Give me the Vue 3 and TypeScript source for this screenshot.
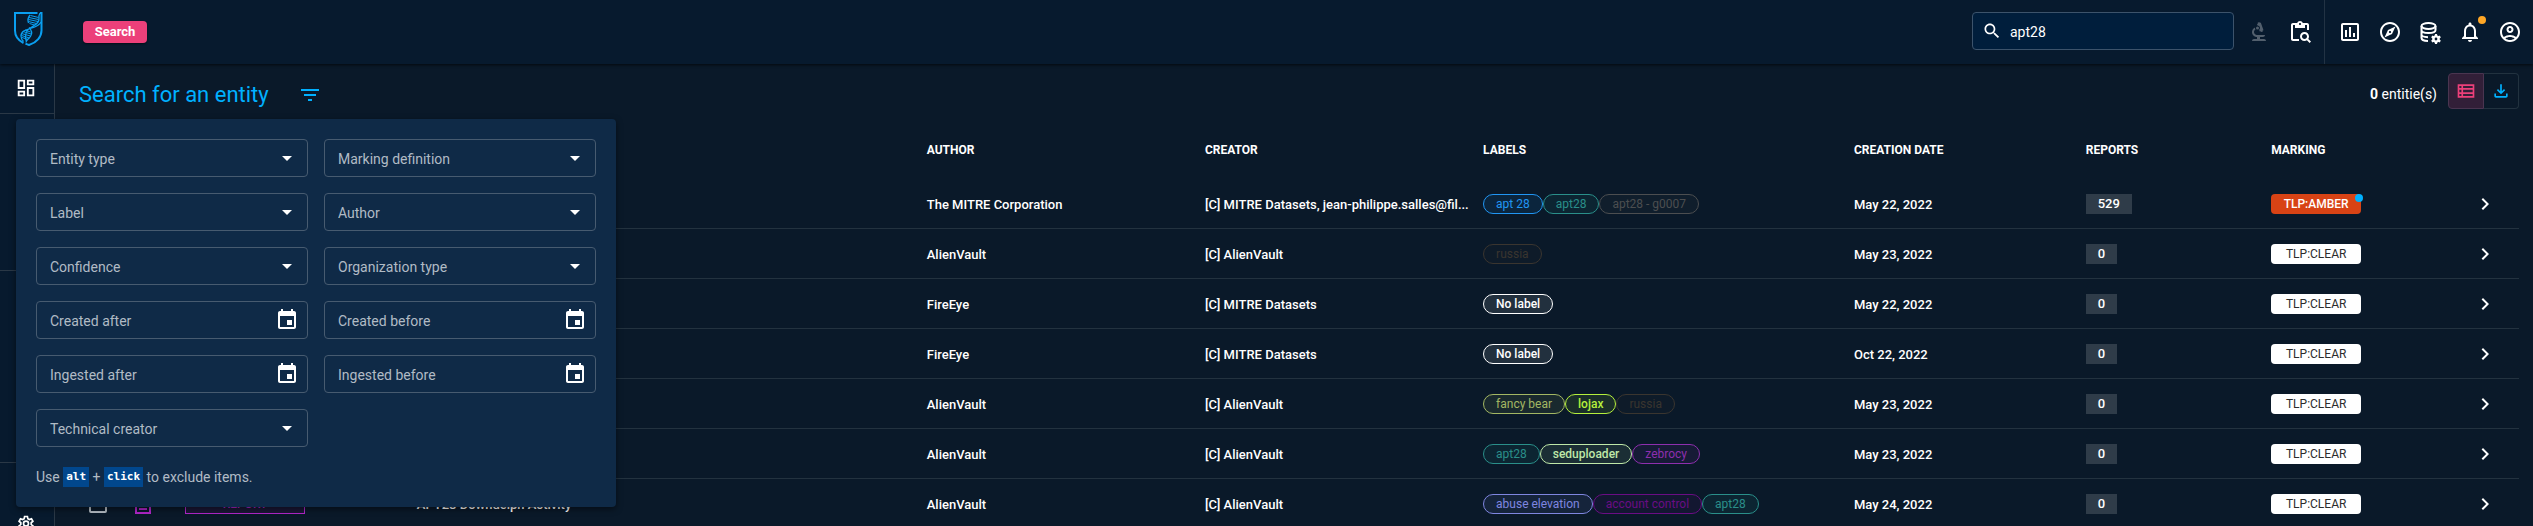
<script setup lang="ts">
import { ref } from 'vue'

interface Chip { text: string; color: string; strong?: boolean }
interface Row {
  name: string; author: string; creator: string; labels: Chip[]
  date: string; reports: number; amber?: boolean
}

const query = ref('apt28')

const teal: Chip = { text: 'apt28', color: '#2a8f8a' }
const russia: Chip = { text: 'russia', color: '#3a352f' }
const noLabel: Chip = { text: 'No label', color: '#ffffff', strong: true }

const rows: Row[] = [
  { name: 'APT28', author: 'The MITRE Corporation', creator: '[C] MITRE Datasets, jean-philippe.salles@fil...', labels: [{ text: 'apt 28', color: '#2196f3' }, teal, { text: 'apt28 - g0007', color: '#4c4e50' }], date: 'May 22, 2022', reports: 529, amber: true },
  { name: 'APT28', author: 'AlienVault', creator: '[C] AlienVault', labels: [russia], date: 'May 23, 2022', reports: 0 },
  { name: 'APT28', author: 'FireEye', creator: '[C] MITRE Datasets', labels: [noLabel], date: 'May 22, 2022', reports: 0 },
  { name: 'APT28', author: 'FireEye', creator: '[C] MITRE Datasets', labels: [noLabel], date: 'Oct 22, 2022', reports: 0 },
  { name: 'APT28', author: 'AlienVault', creator: '[C] AlienVault', labels: [{ text: 'fancy bear', color: '#a3b763' }, { text: 'lojax', color: '#b5f03c', strong: true }, russia], date: 'May 23, 2022', reports: 0 },
  { name: 'APT28', author: 'AlienVault', creator: '[C] AlienVault', labels: [teal, { text: 'seduploader', color: '#bfe8a8', strong: true }, { text: 'zebrocy', color: '#8e2fae' }], date: 'May 23, 2022', reports: 0 },
  { name: 'APT28 Downdelph Activity', author: 'AlienVault', creator: '[C] AlienVault', labels: [{ text: 'abuse elevation', color: '#7f86e0' }, { text: 'account control', color: '#6a0d84' }, teal], date: 'May 24, 2022', reports: 0 },
]

const filters: { label: string; date?: boolean }[] = [
  { label: 'Entity type' }, { label: 'Marking definition' },
  { label: 'Label' }, { label: 'Author' },
  { label: 'Confidence' }, { label: 'Organization type' },
  { label: 'Created after', date: true }, { label: 'Created before', date: true },
  { label: 'Ingested after', date: true }, { label: 'Ingested before', date: true },
  { label: 'Technical creator' },
]

const navIcons = [
  { name: 'Dashboards', path: 'M9 17H7v-7h2v7zm4 0h-2V7h2v10zm4 0h-2v-4h2v4zm2 2H5V5h14v14zm0-16H5c-1.100 0-2 .9-2 2v14c0 1.100.9 2 2 2h14c1.100 0 2-.9 2-2V5c0-1.100-.9-2-2-2z' },
  { name: 'Investigations', path: 'M12 2C6.480 2 2 6.480 2 12s4.480 10 10 10 10-4.480 10-10S17.520 2 12 2zm0 18c-4.410 0-8-3.590-8-8s3.590-8 8-8 8 3.590 8 8-3.590 8-8 8zm-5.500-2.500l7.510-3.490L17.500 6.500 9.990 9.990 6.500 17.500zm5.500-6.600c.61 0 1.100.49 1.100 1.100s-.49 1.100-1.100 1.100-1.100-.49-1.100-1.100.49-1.100 1.100-1.100z' },
]
</script>

<template>
  <div class="app">
    <header class="topbar">
      <a class="logo" href="#" aria-label="Home">
        <svg class="line" width="31" height="36" viewBox="0 0 31 36" stroke="#0a9ff0">
          <path d="M24.500 2H2v17.500c0 5.500 3.500 10 8.500 12.500M27 2h1.500v17.500c0 6-4.500 12-12.500 14.500-1.300-.3-2.300-.7-3.500-1.300" stroke-width="2" />
          <path d="M27 2c-1 2-1.500 3-1 5 .5 4-2.500 6.500-6.500 8.500S12 20 12.500 27l1 4M17 4c-2.500 3-2.500 5-1.500 8M28 11c-2 4-5 4.500-9 6S8 19 8 25c0 2 1 4 2.500 5.500M16 16.500c3 3 3.500 6 1.500 9s-4 3-4.500 6" stroke-width="1.300" />
          <path d="M17.500 4.500l8 2M16 6.500l9.500 2M15.500 8.500l9.500 2M15.500 10.500l8 2M16.500 12.500l5 1.500M12 19l5.500 2M10 20.500l8 2.500M8.500 22.500l9 2.500M8.500 24.500l8 2.500M9 26.500l6 2" stroke-width="1" />
        </svg>
      </a>
      <span class="crumb">Search</span>
      <div class="searchbox">
        <svg class="i20" viewBox="0 0 24 24"><path d="M15.500 14h-.79l-.28-.27C15.410 12.590 16 11.110 16 9.500 16 5.910 13.090 3 9.500 3S3 5.910 3 9.500 5.910 16 9.500 16c1.610 0 3.090-.59 4.230-1.570l.27.28v.79l5 4.990L20.490 19l-4.990-5zm-6 0C7.010 14 5 11.990 5 9.500S7.010 5 9.500 5 14 7.010 14 9.500 11.990 14 9.500 14z" /></svg>
        <input v-model="query" type="text" aria-label="Search" />
      </div>
      <div class="tools">
        <button class="ib dim" aria-label="Enrichment">
          <svg class="i24" viewBox="0 0 24 24"><path d="M7 19c-1.100 0-2 .9-2 2h14c0-1.100-.9-2-2-2h-4v-2h3c1.100 0 2-.9 2-2h-8c-1.660 0-3-1.340-3-3 0-1.090.59-2.040 1.460-2.560C8.170 9.030 8 8.540 8 8c0-.21.04-.42.09-.62C6.280 8.130 5 9.920 5 12c0 2.760 2.240 5 5 5v2H7z" /><path d="M10.560 5.510C11.910 5.540 13 6.640 13 8c0 .75-.33 1.410-.85 1.870l.59 1.620.94-.34.34.94 1.880-.68-.34-.94.94-.34-2.740-7.520-.94.340-.34-.940-1.880.68.34.94-.94.35.56 1.530z" /><circle cx="10.500" cy="8" r="1.500" /></svg>
        </button>
        <button class="ib" aria-label="Bulk search">
          <svg class="i24" viewBox="0 0 24 24"><path d="M19 3h-4.180C14.400 1.840 13.300 1 12 1S9.600 1.840 9.180 3H5c-1.100 0-2 .9-2 2v14c0 1.100.9 2 2 2h6v-2H5V5h2v3h10V5h2v5h2V5c0-1.100-.9-2-2-2zm-7 2c-.55 0-1-.45-1-1s.45-1 1-1 1 .45 1 1-.45 1-1 1z" /><path d="M20.300 18.900c.4-.7.7-1.500.7-2.400 0-2.500-2-4.500-4.500-4.500S12 14 12 16.500s2 4.500 4.500 4.500c.9 0 1.700-.3 2.400-.7l2.700 2.700 1.400-1.400-2.700-2.700zm-3.800.1c-1.400 0-2.500-1.100-2.500-2.500s1.100-2.500 2.500-2.500 2.500 1.100 2.500 2.500-1.100 2.500-2.500 2.500z" /></svg>
        </button>
      </div>
      <nav class="nav" aria-label="Main">
        <button v-for="n in navIcons" :key="n.name" class="ib" :aria-label="n.name">
          <svg class="i24" viewBox="0 0 24 24"><path :d="n.path" /></svg>
        </button>
        <button class="ib" aria-label="Data">
          <svg class="i24 line" viewBox="0 0 24 24" stroke="#fff" stroke-width="2"><ellipse cx="10.500" cy="6" rx="7" ry="3" /><path d="M3.500 6v12c0 1.500 2.500 3 6.500 3M3.500 10c0 1.700 3 3 7 3s7-1.300 7-3V6M3.500 14.500c0 1.500 2.500 2.500 6.500 2.700" /><circle cx="18" cy="19" r="2.600" stroke-width="2.400" /><path d="M18 14v3M18 21v3M13.700 16.500l2.600 1.500M19.700 20l2.600 1.500M13.700 21.500l2.600-1.500M19.700 18l2.600-1.500" stroke-width="2.200" /></svg>
        </button>
        <button class="ib" aria-label="Notifications">
          <svg class="i24" viewBox="0 0 24 24"><path d="M12 22c1.100 0 2-.9 2-2h-4c0 1.100.9 2 2 2zm6-6v-5c0-3.070-1.630-5.640-4.500-6.320V4c0-.83-.67-1.500-1.500-1.500s-1.500.67-1.500 1.500v.68C7.640 5.360 6 7.920 6 11v5l-2 2v1h16v-1l-2-2zm-2 1H8v-6c0-2.480 1.510-4.500 4-4.500s4 2.020 4 4.500v6z" /></svg>
          <i class="dot"></i>
        </button>
        <button class="ib" aria-label="Profile">
          <svg class="i24" viewBox="0 0 24 24"><path d="M12 2C6.480 2 2 6.480 2 12s4.480 10 10 10 10-4.480 10-10S17.520 2 12 2zM7.350 18.500C8.660 17.560 10.260 17 12 17s3.340.56 4.650 1.500C15.340 19.440 13.740 20 12 20s-3.340-.56-4.650-1.500zm10.790-1.380C16.450 15.800 14.320 15 12 15s-4.450.8-6.140 2.120C4.700 15.730 4 13.950 4 12c0-4.420 3.580-8 8-8s8 3.580 8 8c0 1.950-.7 3.730-1.860 5.120z" /><path d="M12 6c-1.930 0-3.500 1.570-3.500 3.500S10.070 13 12 13s3.500-1.570 3.500-3.500S13.930 6 12 6zm0 5c-.83 0-1.500-.67-1.500-1.500S11.170 8 12 8s1.500.67 1.500 1.500S12.830 11 12 11z" /></svg>
        </button>
      </nav>
    </header>

    <div class="body">
      <aside class="side">
        <a class="side-top" href="#" aria-label="Home">
          <svg class="i22" viewBox="0 0 24 24"><path d="M19 5v2h-4V5h4M9 5v6H5V5h4m10 8v6h-4v-6h4M9 17v2H5v-2h4M21 3h-8v6h8V3zM11 3H3v10h8V3zm10 8h-8v10h8V11zm-10 4H3v6h8v-6z" /></svg>
        </a>
        <div class="side-a"></div>
        <div class="side-b"></div>
        <a class="side-c" href="#" aria-label="Settings">
          <svg class="i20 line" viewBox="0 0 24 24" stroke="#fff" stroke-width="2"><path d="M10.300 3h3.400l.5 2.700 1.800 1 2.600-.9 1.700 2.900-2.100 1.800v2l2.100 1.800-1.700 2.900-2.600-.9-1.800 1-.5 2.700h-3.400l-.5-2.700-1.800-1-2.600.9-1.700-2.900 2.100-1.800v-2L3.700 8.700l1.700-2.900 2.600.9 1.800-1z" /><circle cx="12" cy="11.500" r="3" /></svg>
        </a>
      </aside>

      <main class="main">
        <div class="heading">
          <h1>Search for an entity</h1>
          <button class="ib filter" aria-label="Filters">
            <svg class="i24 sky" viewBox="0 0 24 24"><path d="M10 18h4v-2h-4v2zM3 6v2h18V6H3zm3 7h12v-2H6v2z" /></svg>
          </button>
          <div class="count"><strong>0</strong> entitie(s)</div>
          <div class="toggle">
            <button class="on" aria-label="List view"><svg class="i20 pink" viewBox="0 0 24 24"><path d="M2 4v16h20V4H2zm4.500 14H4v-2.500h2.500V18zm0-4.500H4v-3h2.500v3zm0-5H4V6h2.500v2.500zM20 18H8.500v-2.500H20V18zm0-4.500H8.500v-3H20v3zm0-5H8.500V6H20v2.500z" /></svg></button>
            <button class="off" aria-label="Export"><svg class="i20 sky" viewBox="0 0 24 24"><path d="M18 15v3H6v-3H4v3c0 1.100.9 2 2 2h12c1.100 0 2-.9 2-2v-3h-2zm-1-4l-1.410-1.410L13 12.170V4h-2v8.170L8.410 9.590 7 11l5 5 5-5z" /></svg></button>
          </div>
        </div>

        <table class="grid">
          <colgroup>
            <col class="c-check" /><col class="c-icon" /><col class="c-type" /><col class="c-name" />
            <col class="c-author" /><col class="c-author" /><col class="c-labels" /><col class="c-type" />
            <col class="c-reports" /><col class="c-reports" /><col />
          </colgroup>
          <thead>
            <tr>
              <th></th><th></th><th>TYPE</th><th>NAME</th><th>AUTHOR</th><th>CREATOR</th><th>LABELS</th>
              <th>CREATION DATE</th><th>REPORTS</th><th>MARKING</th><th></th>
            </tr>
          </thead>
          <tbody>
            <tr v-for="(r, i) in rows" :key="i">
              <td><input class="check" type="checkbox" :aria-label="'Select ' + r.name" /></td>
              <td><svg class="i24 line" viewBox="0 0 24 24" stroke="#b026c8" stroke-width="2"><path d="M14 3H5v18h14V8zM8 13h8M8 17h8" /></svg></td>
              <td><span class="type">REPORT</span></td>
              <td>{{ r.name }}</td>
              <td>{{ r.author }}</td>
              <td>{{ r.creator }}</td>
              <td>
                <div class="chips">
                  <span v-for="c in r.labels" :key="c.text" class="chip" :class="{ strong: c.strong }" :style="{ color: c.color }">{{ c.text }}</span>
                </div>
              </td>
              <td>{{ r.date }}</td>
              <td><span class="num">{{ r.reports }}</span></td>
              <td><span class="mark" :class="{ amber: r.amber }">{{ r.amber ? 'TLP:AMBER' : 'TLP:CLEAR' }}<i v-if="r.amber" class="mark-dot"></i></span></td>
              <td><svg class="i24 chev" viewBox="0 0 24 24"><path d="M10 6L8.590 7.410 13.170 12l-4.580 4.590L10 18l6-6z" /></svg></td>
            </tr>
          </tbody>
        </table>
      </main>
    </div>

    <section class="panel" aria-label="Filters">
      <div class="fields">
        <div v-for="f in filters" :key="f.label" class="field">
          <input type="text" :placeholder="f.label" :aria-label="f.label" />
          <button v-if="f.date" class="ib" :aria-label="'Pick ' + f.label"><svg class="i24" viewBox="0 0 24 24"><path d="M17 12h-5v5h5v-5zM16 1v2H8V1H6v2H5c-1.110 0-1.990.9-1.990 2L3 19c0 1.100.89 2 2 2h14c1.100 0 2-.9 2-2V5c0-1.100-.9-2-2-2h-1V1h-2zm3 18H5V8h14v11z" /></svg></button>
          <button v-else class="ib" :aria-label="'Open ' + f.label"><svg class="i24" viewBox="0 0 24 24"><path d="M7 10l5 5 5-5z" /></svg></button>
        </div>
      </div>
      <p class="hint">Use <code>alt</code> + <code>click</code> to exclude items.</p>
    </section>
  </div>
</template>

<style>
body {
  background: #0a1929;
  overflow: hidden;
}
</style>

<style scoped>
.app {
  position: relative;
  height: 100vh;
  min-height: 400px;
  overflow: hidden;
  display: flex;
  flex-direction: column;
  color: #fff;
  background: #0a1929;
  font-family: Roboto, "Noto Sans", sans-serif;
  font-size: 13px;
}
.app * { box-sizing: border-box; }
svg { fill: #fff; display: block; }
.line { fill: none; }
.sky { fill: #00b1ff; }
.pink { fill: #ec407a; }
.i20 { width: 20px; height: 20px; }
.i22 { width: 22px; height: 22px; }
.i24 { width: 24px; height: 24px; }
.ib { background: none; border: 0; padding: 0; display: block; position: relative; }

.topbar {
  flex: none;
  height: 64px;
  display: flex;
  align-items: center;
  background: #071a2e;
  box-shadow: 0 1px 3px rgba(0, 0, 0, 0.7);
  z-index: 1;
}
.logo { margin: 0 39px 6px 13px; }
.crumb {
  background: #ec407a;
  border-radius: 4px;
  height: 22px;
  line-height: 22px;
  width: 64px;
  text-align: center;
  font-weight: 700;
  box-shadow: 0 1px 2px rgba(0, 0, 0, 0.5);
}
.searchbox {
  margin-left: auto;
  width: 262px;
  height: 38px;
  display: flex;
  align-items: center;
  gap: 8px;
  padding: 0 9px;
  margin-bottom: 2px;
  background: #001e3c;
  border: 1px solid #3c536b;
  border-radius: 4px;
}
.searchbox input {
  flex: 1;
  min-width: 0;
  background: none;
  border: 0;
  padding: 2px 0 0;
  outline: none;
  color: #fff;
  font: 14px Roboto, sans-serif;
}
.tools { display: flex; align-items: center; gap: 17px; margin: 0 12px 0 13px; }
.dim { opacity: 0.3; }
.nav {
  align-self: stretch;
  display: flex;
  align-items: center;
  gap: 16px;
  padding: 0 11px 0 13px;
  border-left: 1px solid #223344;
}
.dot {
  position: absolute;
  top: -4px;
  right: -4px;
  width: 8px;
  height: 8px;
  border-radius: 50%;
  background: #ffa726;
}

.body { flex: 1; display: flex; min-height: 0; }
.side { flex: none; width: 55px; background: #071a2e; border-right: 1px solid #2a3846; }
.side-top { display: flex; padding: 13px 15px 0; height: 50px; border-bottom: 1px solid #2a3846; }
.side-a { height: 157px; border-bottom: 1px solid #2a3846; }
.side-b { height: 192px; border-bottom: 1px solid #2a3846; }
.side-c { display: flex; padding: 51px 16px 0; }

.main { flex: 1; min-width: 0; padding: 9px 14px 0 24px; }
.heading { display: flex; align-items: center; height: 40px; }
h1 { margin: 0; font-size: 22px; font-weight: 400; color: #00b1ff; line-height: 40px; padding-top: 4px; }
.filter { margin: 4px 0 0 29px; }
.count { margin: 2px 11px 0 auto; font-size: 14px; }
.toggle { display: flex; height: 36px; margin-bottom: 4px; }
.toggle button {
  width: 36px;
  padding: 0;
  display: flex;
  align-items: center;
  justify-content: center;
  background: none;
  border: 1px solid #22323f;
}
.toggle .on { background: #321f38; border-color: #4a3550; border-radius: 4px 0 0 4px; }
.toggle .off { border-left: 0; width: 35px; border-radius: 0 4px 4px 0; }

.grid { width: 100%; table-layout: fixed; border-collapse: separate; border-spacing: 0; margin-top: 12px; }
.c-check { width: 52px; }
.c-icon { width: 54px; }
.c-type { width: 9.5%; }
.c-name { width: 20.9%; }
.c-author { width: 11.4%; }
.c-labels { width: 15.2%; }
.c-reports { width: 7.6%; }
th { height: 54px; padding: 0 0 4px; text-align: left; font-size: 12px; font-weight: 700; }
td {
  height: 50px;
  padding: 1px 0 0;
  border-bottom: 1px solid #23323f;
  font-weight: 500;
  white-space: nowrap;
}
.check {
  appearance: none;
  display: block;
  width: 18px;
  height: 18px;
  margin: 0 0 0 10px;
  border: 2px solid #b4bcc4;
  border-radius: 2px;
}
.type {
  display: block;
  width: 120px;
  height: 20px;
  line-height: 18px;
  border: 1px solid #b026c8;
  background: #1a1735;
  color: #b026c8;
  text-align: center;
  font-size: 12px;
}
.chips { display: flex; }
.chip {
  height: 20px;
  line-height: 18px;
  padding: 0 12px;
  border: 1px solid currentColor;
  border-radius: 10px;
  font-size: 12px;
  font-weight: 400;
  background: color-mix(in srgb, currentColor 10%, transparent);
}
.strong { font-weight: 500; }
.num {
  display: block;
  width: fit-content;
  height: 20px;
  line-height: 20px;
  padding: 0 12px;
  background: #2f3c49;
}
.mark {
  position: relative;
  display: block;
  width: 90px;
  height: 20px;
  line-height: 20px;
  border-radius: 4px;
  background: #fff;
  color: #2b2b2b;
  font-size: 12px;
  font-weight: 400;
  text-align: center;
}
.amber { background: #d84315; color: #fff; font-weight: 500; }
.mark-dot {
  position: absolute;
  top: 0;
  right: -2px;
  width: 8px;
  height: 8px;
  border-radius: 50%;
  background: #00b1ff;
}
.chev { margin-left: 16px; }

.panel {
  position: absolute;
  left: 16px;
  top: 119px;
  width: 600px;
  padding: 20px;
  background: #0f2a47;
  border-radius: 4px;
  box-shadow: 0 2px 6px rgba(0, 0, 0, 0.5);
  z-index: 2;
}
.fields { display: grid; grid-template-columns: 1fr 1fr; gap: 16px; }
.field {
  display: flex;
  align-items: center;
  height: 38px;
  padding: 0 8px 0 13px;
  border: 1px solid #475b70;
  border-radius: 4px;
}
.field input {
  flex: 1;
  min-width: 0;
  background: none;
  border: 0;
  padding: 2px 0 0;
  outline: none;
  color: #fff;
  font: 14px Roboto, sans-serif;
}
.field input::placeholder { color: #b1bbc5; opacity: 1; }
.hint { margin: 20px 0 0; line-height: 20px; font-size: 14px; color: #b1bbc5; }
code {
  display: inline-block;
  height: 20px;
  padding: 0 3px;
  background: #01478d;
  color: #fff;
  font: bold 11px/20px "DejaVu Sans Mono", monospace;
  vertical-align: top;
}
</style>
